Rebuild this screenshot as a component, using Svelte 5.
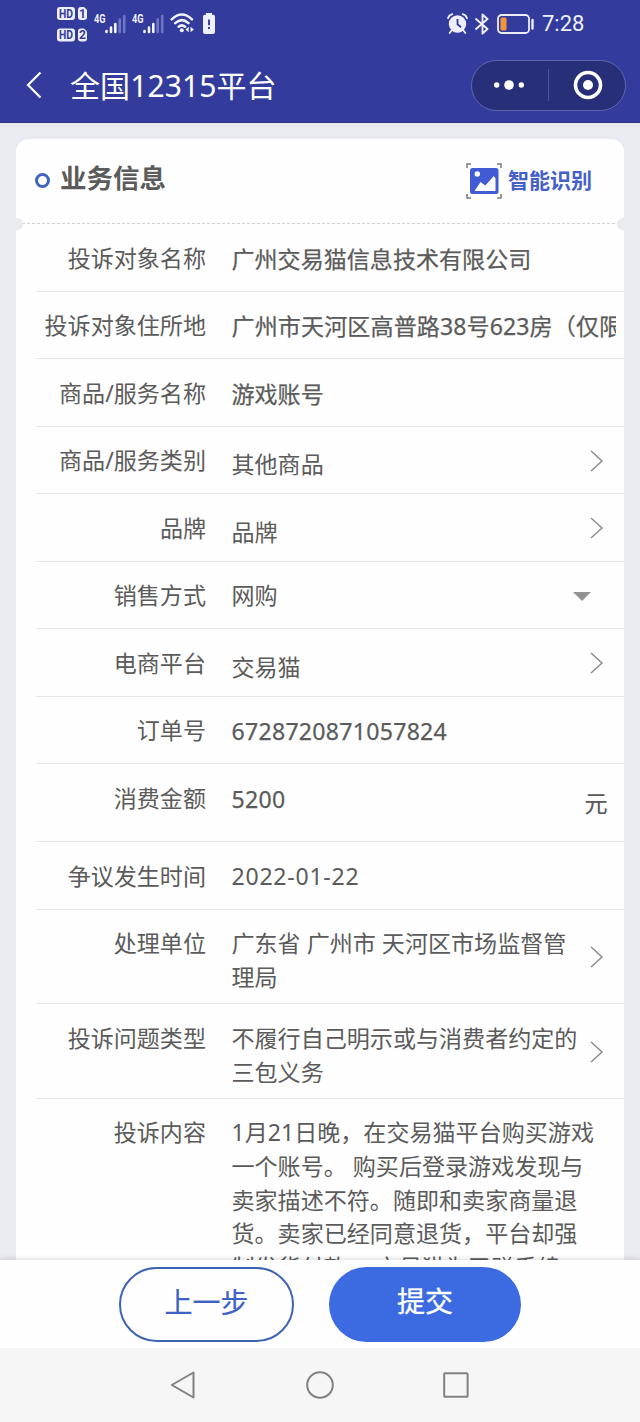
<script>
  const rows = [
    { label: '投诉对象名称', value: '广州交易猫信息技术有限公司', kind: 'input' },
    { label: '投诉对象住所地', value: '广州市天河区高普路38号623房（仅限', kind: 'input address' },
    { label: '商品/服务名称', value: '游戏账号', kind: 'input' },
    { label: '商品/服务类别', value: '其他商品', kind: 'link', icon: 'chevron' },
    { label: '品牌', value: '品牌', kind: 'link', icon: 'chevron' },
    { label: '销售方式', value: '网购', kind: 'text', icon: 'caret' },
    { label: '电商平台', value: '交易猫', kind: 'link', icon: 'chevron' },
    { label: '订单号', value: '6728720871057824', kind: 'input number' },
    { label: '消费金额', value: '5200', kind: 'input number amount', icon: 'unit' },
    { label: '争议发生时间', value: '2022-01-22', kind: 'text date' },
    { label: '处理单位', value: '广东省 广州市 天河区市场监督管\n理局', kind: 'double', icon: 'chevron' },
    { label: '投诉问题类型', value: '不履行自己明示或与消费者约定的\n三包义务', kind: 'double', icon: 'chevron' },
    {
      label: '投诉内容',
      value:
        '1月21日晚，在交易猫平台购买游戏\n一个账号。 购买后登录游戏发现与\n卖家描述不符。随即和卖家商量退\n货。卖家已经同意退货，平台却强\n制发货付款。 交易猫为了赚手续',
      kind: 'long'
    }
  ];
</script>

{#snippet signal()}
  <svg class="signal" width="34" height="24" viewBox="0 0 34 24">
    <text x="0" y="11" font-size="13" font-weight="700" textLength="11.5" lengthAdjust="spacingAndGlyphs" fill="#eef0ff">4G</text>
    <g stroke-width="2.6" stroke-linecap="round">
      <path d="M12.5 20v-1M17 20v-4.5M21.3 20v-8" stroke="#f3f4ff" />
      <path d="M25.7 20V7.5M30.2 20V4" stroke="#6e77c4" />
    </g>
  </svg>
{/snippet}

<div class="screen">
  <header>
    <div class="status">
      <div class="status-left">
        <svg class="hd" width="31" height="38" viewBox="0 0 31 38">
          <g fill="#eef0ff">
            <rect width="18" height="13" rx="3" />
            <path d="M24 0h3l3 3v7a3 3 0 0 1-3 3h-3a3 3 0 0 1-3-3V3a3 3 0 0 1 3-3z" />
            <rect y="21.500" width="18" height="13" rx="3" />
            <path d="M24 21.500h3l3 3v7a3 3 0 0 1-3 3h-3a3 3 0 0 1-3-3v-7a3 3 0 0 1 3-3z" />
          </g>
          <g fill="#333c9c" font-size="12" font-weight="700" text-anchor="middle">
            <text x="9" y="10.800" textLength="14" lengthAdjust="spacingAndGlyphs">HD</text>
            <text x="25.5" y="10.800">1</text>
            <text x="9" y="32.300" textLength="14" lengthAdjust="spacingAndGlyphs">HD</text>
            <text x="25.5" y="32.300">2</text>
          </g>
        </svg>
        {@render signal()}
        {@render signal()}
        <svg class="wifi" width="25" height="22" viewBox="0 0 25 22">
          <g fill="none" stroke="#f1f2ff" stroke-width="2.5" stroke-linecap="round">
            <path d="M1.7 7.3Q11.7-2.3 22 7.3M5.2 11.2Q11.8 5 18.5 11.2M8.6 14.8Q11.8 12 15 14.8" />
          </g>
          <circle cx="11.8" cy="18.2" r="2" fill="#f1f2ff" />
          <path d="M18.7 14.8v5.5L15.5 17.5zM20.5 14.8v5.5l3.4-2.8z" fill="#f1f2ff" />
        </svg>
        <svg class="alert" width="12" height="21" viewBox="0 0 12 21">
          <path d="M3 0h6v1.700h1A2 2 0 0 1 12 3.700V19a2 2 0 0 1-2 2H2a2 2 0 0 1-2-2V3.700A2 2 0 0 1 2 1.700h1z" fill="#eef0ff" />
          <path d="M6 6.500v5.700M6 14v2" stroke="#333c9c" stroke-width="1.900" />
        </svg>
      </div>
      <div class="status-right">
        <svg width="21" height="21" viewBox="0 0 21 21">
          <circle cx="10.500" cy="11" r="8.700" fill="#eeeefe" />
          <path d="M1 5.200Q2 2 5.300 1.200M20 5.200Q19 2 15.700 1.200M4.500 17.500 2.700 20M16.500 17.500l1.800 2.500" fill="none" stroke="#eeeefe" stroke-width="1.800" stroke-linecap="round" />
          <path d="M10.500 6v5.300l3.600 3" fill="none" stroke="#333c9c" stroke-width="1.800" />
        </svg>
        <svg class="bt" width="14" height="22" viewBox="0 0 14 22">
          <path d="M1 6l11.500 10L7.500 20.500V1.500L12.500 6 1 16" fill="none" stroke="#eef0ff" stroke-width="1.900" stroke-linejoin="round" stroke-linecap="round" />
        </svg>
        <svg class="battery" width="38" height="20" viewBox="0 0 38 20">
          <rect x="1" y="1" width="31" height="18" rx="3.500" fill="none" stroke="#eceefe" stroke-width="1.800" />
          <rect x="3.500" y="3.500" width="6" height="13" rx="1.500" fill="#f5953b" />
          <path d="M35.500 6v8.500" stroke="#eceefe" stroke-width="2.400" stroke-linecap="round" />
        </svg>
        <span class="clock">7:28</span>
      </div>
    </div>
    <div class="titlebar">
      <svg class="back" width="16" height="28" viewBox="0 0 16 28">
        <path d="M14.500 1.500 2 14l12.500 12.500" fill="none" stroke="#fff" stroke-width="2.200" />
      </svg>
      <h1>全国12315平台</h1>
      <div class="capsule">
        <svg width="30" height="12" viewBox="0 0 30 12" fill="#fff">
          <circle cx="2.700" cy="6" r="2.700" /><circle cx="15" cy="6" r="4.800" /><circle cx="27.300" cy="6" r="2.700" />
        </svg>
        <i></i>
        <svg width="30" height="30" viewBox="0 0 30 30">
          <circle cx="15" cy="15" r="12.500" fill="none" stroke="#fff" stroke-width="3.600" />
          <circle cx="15" cy="15" r="5" fill="#fff" />
        </svg>
      </div>
    </div>
  </header>

  <main>
    <section class="card">
      <div class="card-head">
        <span class="ring"></span>
        <h2>业务信息</h2>
        <div class="scan">
          <svg width="36" height="36" viewBox="0 0 36 36">
            <path d="M1 5V1h4M31 1h4v4M35 31v4h-4M5 35H1v-4" fill="none" stroke="#777b83" stroke-width="1.500" />
            <rect x="4" y="5" width="28.500" height="26" rx="2.500" fill="#415bd5" />
            <circle cx="11.300" cy="11" r="2.700" fill="#fff" />
            <path d="M8.500 28 14.500 19l4.800 3.500 8.500-9.500 1.700 2.500V28z" fill="#fff" />
          </svg>
          <span>智能识别</span>
        </div>
      </div>
      <div class="rows">
        {#each rows as row}
          <div class="row {row.kind}">
            <div class="label">{row.label}</div>
            <div class="value">{row.value}</div>
            {#if row.icon === 'chevron'}
              <svg class="chevron" width="14" height="22" viewBox="0 0 14 22">
                <path d="M1 1l11 10L1 21" fill="none" stroke="#8d8d8d" stroke-width="1.500" />
              </svg>
            {:else if row.icon === 'caret'}
              <svg class="caret" width="18" height="9" viewBox="0 0 18 9"><path d="M0 0h18L9 9z" fill="#929292" /></svg>
            {:else if row.icon === 'unit'}
              <span class="unit">元</span>
            {/if}
          </div>
        {/each}
      </div>
    </section>
  </main>

  <footer>
    <button class="prev">上一步</button>
    <button class="submit">提交</button>
  </footer>

  <nav>
    <svg width="26" height="30" viewBox="0 0 26 30"><path d="M23.500 2.500v25L1.800 15z" /></svg>
    <svg width="30" height="30" viewBox="0 0 30 30"><circle cx="15" cy="15" r="12.800" /></svg>
    <svg width="26" height="30" viewBox="0 0 26 30"><rect x="1.200" y="3.300" width="23.400" height="23.400" rx=".8" /></svg>
  </nav>
</div>

<style>
  :global(body) { margin: 0; }
  .screen {
    width: 640px;
    height: 1422px;
    display: flex;
    flex-direction: column;
    overflow: hidden;
    background: #e9ebf0;
    color: #5b5b5b;
    font-family: "Noto Sans", "Noto Sans CJK SC", sans-serif;
  }
  svg { display: block; flex: none; }
  header {
    height: 122.500px;
    box-sizing: border-box;
    flex: none;
    background: #333c9c;
    border-bottom: 1px solid #2c3484;
    color: #fff;
  }
  .status { height: 48px; display: flex; justify-content: space-between; }
  .status-left { display: flex; align-items: flex-start; padding-left: 57px; }
  .status-left svg { font-family: Roboto, sans-serif; }
  .hd { margin-top: 7px; }
  .signal { margin: 12px 0 0 6px; }
  .signal + .signal { margin-left: 4px; }
  .wifi { margin: 12px 0 0 4px; }
  .alert { margin: 13px 0 0 8px; }
  .status-right { display: flex; align-items: center; height: 47px; padding-right: 57px; }
  .bt { margin-left: 7px; }
  .battery { margin-left: 8px; }
  .clock { margin-left: 7px; font: 400 22px/30px Roboto, sans-serif; width: 41px; color: #eef0ff; white-space: nowrap; }
  .titlebar { display: flex; align-items: center; height: 74px; padding: 0 14px 0 26px; }
  .back { margin-top: -1px; }
  h1 { margin: 2px 0 0 28px; font-size: 30px; line-height: 44px; font-weight: 400; letter-spacing: .1px; flex: 1; }
  .capsule {
    box-sizing: border-box;
    width: 155px;
    height: 51px;
    border: 1px solid #5f67b2;
    border-radius: 26px;
    background: #282f79;
    display: flex;
    align-items: center;
    padding: 0 21px 0 22px;
  }
  .capsule i { flex: none; width: 1px; height: 32px; background: #4d549c; margin: 0 24px 0 24px; }

  main { flex: none; height: 1137.500px; padding: 16.500px 16px 0; box-sizing: border-box; overflow: hidden; }
  .card { background: #fefefe; border-radius: 13px 13px 0 0; height: 1200px; }
  .card-head {
    position: relative;
    height: 85px;
    box-sizing: border-box;
    display: flex;
    align-items: center;
    padding: 0 32px 1px 19px;
    background: repeating-linear-gradient(90deg, #d2d2d2 0 3px, transparent 3px 5px) 6px 100% / 596px 1px no-repeat;
  }
  .card-head::before, .card-head::after {
    content: "";
    position: absolute;
    bottom: -6px;
    width: 7px;
    height: 12px;
    background: #e9ebf0;
  }
  .card-head::before { left: 0; border-radius: 0 7px 7px 0; }
  .card-head::after { right: 0; border-radius: 7px 0 0 7px; }
  .ring { width: 9px; height: 9px; border: 3.500px solid #4065c0; border-radius: 50%; margin: -2px 10px 0 0; }
  h2 { margin: -7px 0 0; font-size: 26.500px; line-height: 40px; font-weight: 700; flex: 1; }
  .scan { display: flex; align-items: center; gap: 6px; color: #4560c8; font-size: 21px; font-weight: 700; }
  .scan span { line-height: 30px; margin-top: -2px; }

  .rows { padding-left: 20px; }
  .row {
    box-sizing: border-box;
    height: 67.560px;
    border-bottom: 1.500px solid #e6e6e7;
    display: flex;
    align-items: flex-start;
    font-size: 23.070px;
    line-height: 33.700px;
    padding-top: 17.500px;
  }
  .label { width: 170px; text-align: right; flex: none; }
  .value { width: 384.500px; margin-left: 25.500px; white-space: pre; flex: none; }
  .input .value { -webkit-text-stroke: .25px currentColor; padding-top: 1px; }
  .address .value { overflow: hidden; letter-spacing: .1px; }
  .link .value { padding-top: 4px; }
  .number .value { letter-spacing: .28px; }
  .date .value { letter-spacing: .75px; }
  .amount { height: 78px; }
  .amount .value { width: 353px; }
  .unit { padding-top: 5px; -webkit-text-stroke: .2px currentColor; }
  .double { height: 94.400px; }
  .long { height: 220px; }
  .link .value, .double .value, .text .value { width: 358px; }
  .chevron { margin-top: 5.500px; }
  .double .chevron { margin-top: 19px; }
  .caret { margin: 13px 0 0 -17px; }

  footer {
    position: relative;
    height: 88px;
    flex: none;
    box-sizing: border-box;
    background: #fefefe;
    box-shadow: 0 -1px 5px rgba(0, 0, 0, .14);
    display: flex;
    padding: 7px 119px 0;
    gap: 35px;
  }
  button {
    box-sizing: border-box;
    height: 75px;
    border-radius: 38px;
    font: 400 28px/40px "Noto Sans", "Noto Sans CJK SC", sans-serif;
    padding: 0 0 5px;
  }
  .prev { width: 175px; border: 2px solid #3e62b4; color: #3e62c4; background: #fefefe; -webkit-text-stroke: .2px currentColor; }
  .submit { width: 192px; border: 0; color: #fff; background: #3b6ae1; -webkit-text-stroke: .3px currentColor; padding-bottom: 7px; }

  nav {
    position: relative;
    height: 74px;
    flex: none;
    box-sizing: border-box;
    background: #f6f6f6;
    display: flex;
    align-items: center;
    padding-left: 170px;
    gap: 109px;
  }
  nav svg { fill: none; stroke: #818181; stroke-width: 2; stroke-linejoin: round; }
  nav svg:last-child { margin-left: -1px; }
</style>
